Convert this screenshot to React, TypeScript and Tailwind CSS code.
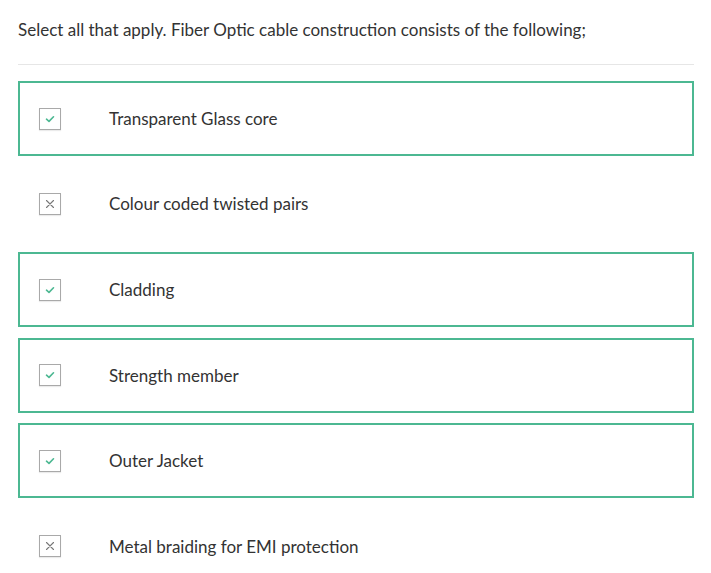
const options = [
  { label: "Transparent Glass core", correct: true },
  { label: "Colour coded twisted pairs", correct: false },
  { label: "Cladding", correct: true },
  { label: "Strength member", correct: true },
  { label: "Outer Jacket", correct: true },
  { label: "Metal braiding for EMI protection", correct: false },
];

const Mark = ({ correct }: { correct: boolean }) => (
  <span className="flex items-center justify-center w-[22px] h-[22px] border border-[#a9a9a9] bg-white shadow-[0_1px_1px_rgba(0,0,0,0.08)]">
    {correct ? (
      <svg width="10" height="8" viewBox="0 0 10 8" fill="none">
        <path d="M1.5 4.2 L4 6.4 L8.5 1.8" stroke="#4cb892" strokeWidth="1.6" strokeLinecap="round" strokeLinejoin="round" />
      </svg>
    ) : (
      <svg width="10" height="10" viewBox="0 0 10 10" fill="none">
        <path d="M1.5 1.5 L8.5 8.5 M8.5 1.5 L1.5 8.5" stroke="#777" strokeWidth="1.1" strokeLinecap="round" />
      </svg>
    )}
  </span>
);

const App = () => {
  return (
    <div className="w-[711px] h-[573px] overflow-hidden bg-white px-[18px] pt-[19px] text-[#333] font-['Lato','Liberation_Sans',sans-serif]">
      <p className="text-[17px] leading-[22px]">
        Select all that apply. Fiber Optic cable construction consists of the following;
      </p>
      <hr className="mt-[23px] border-t border-[#e6e6e6] w-[676px]" />
      <div className="flex flex-col gap-[10.6px] mt-[16px] w-[676px]">
        {options.map((o) => (
          <div
            key={o.label}
            className={`flex items-center h-[75px] pl-[19px] ${o.correct ? "border-2 border-[#4cb892]" : "border-2 border-transparent"}`}
          >
            <Mark correct={o.correct} />
            <span className="ml-[48px] text-[17px] text-[#333]">{o.label}</span>
          </div>
        ))}
      </div>
    </div>
  );
};

export default App;
